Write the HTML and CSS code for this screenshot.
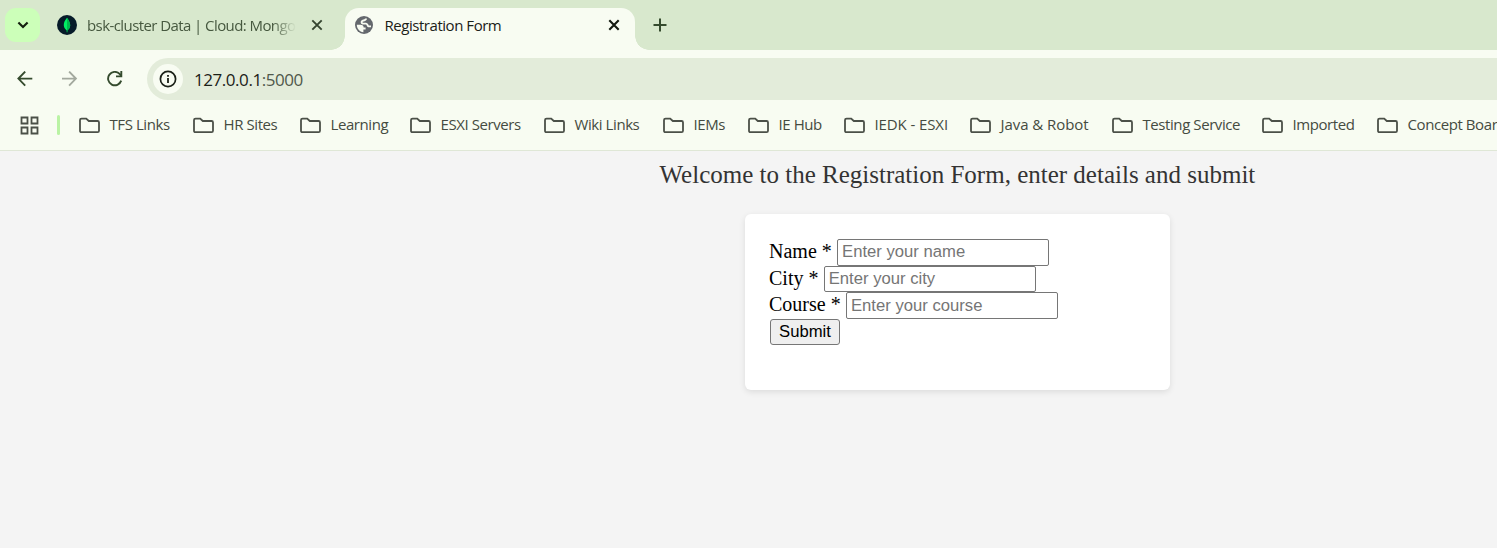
FILE: index.html
```html
<!DOCTYPE html>
<html lang="en">
<head>
<meta charset="utf-8">
<title>Registration Form</title>
<link rel="stylesheet" href="styles.css">
</head>
<body>
<svg class="defs" width="0" height="0"><symbol id="folder" viewBox="0 0 22 17"><path d="M2.6 1.6H7.2L9.8 4H18.6Q20 4 20 5.4V13.8Q20 15.2 18.6 15.2H2.4Q1 15.2 1 13.8V3Q1 1.6 2.6 1.6Z" fill="none" stroke="#4b5048" stroke-width="1.8"/></symbol></svg>
<header class="browser">
  <div class="tabs">
    <div class="search"><svg width="16" height="16" viewBox="0 0 16 16"><path d="M3.4 5.5L8 10L12.6 5.5" fill="none" stroke="#14200f" stroke-width="2.2"/></svg></div>
    <div class="tab idle">
      <svg class="fav" width="20" height="20" viewBox="0 0 20 20"><circle cx="10" cy="10" r="10" fill="#061b29"/><path d="M10 2.8C7.5 6 6.6 8 6.8 10.5C7 13 8.5 14.5 9.7 15.4V17.2H10.3V15.4C11.8 14.3 13.1 12.6 13.2 10.4C13.3 8 12 5.5 10 2.8Z" fill="#00ed64"/><path d="M10 2.8V17.2H10.3V15.4C11.8 14.3 13.1 12.6 13.2 10.4C13.3 8 12 5.5 10 2.8Z" fill="#00b84e"/></svg>
      <span class="title long">bsk-cluster Data | Cloud: Mongo</span>
      <svg class="close" width="12" height="12" viewBox="0 0 12 12"><path d="M1.3 1.3L10.7 10.7M10.7 1.3L1.3 10.7" stroke="#35452f" stroke-width="1.9"/></svg>
    </div>
    <div class="tab active">
      <svg class="fav globe" width="18" height="18" viewBox="0 0 18 18"><circle cx="9" cy="9" r="9" fill="#64686d"/><path d="M1.8 8.8H5.6C7.6 8.8 8.6 9.8 8.6 11.6H10.6V13.6H8.4V16.2C4.6 15.8 1.8 12.9 1.8 8.8Z" fill="#f8fcf2"/><path d="M11 2.6C11 4.4 9.4 4.6 7.6 4.8C6.2 5.2 6.2 7.2 7.8 7.6H11C13 7.8 12.2 10 13.6 10.4H16" fill="none" stroke="#f8fcf2" stroke-width="1.9"/></svg>
      <span class="title">Registration Form</span>
      <svg class="close" width="12" height="12" viewBox="0 0 12 12"><path d="M1.3 1.3L10.7 10.7M10.7 1.3L1.3 10.7" stroke="#141a11" stroke-width="2.1"/></svg>
    </div>
    <svg class="plus" width="14" height="14" viewBox="0 0 14 14"><path d="M7 .5V13.5M.5 7H13.5" stroke="#354b2e" stroke-width="2"/></svg>
  </div>
  <div class="toolbar">
    <svg class="nav" width="16" height="16" viewBox="0 0 16 16"><path d="M15.3 7.6H1.6M8.2 .6L1.4 7.6L8.2 14.6" fill="none" stroke="#354b2e" stroke-width="1.9"/></svg>
    <svg class="nav" width="16" height="16" viewBox="0 0 16 16"><path d="M0 7.6H13.7M7.1 .6L13.9 7.6L7.1 14.6" fill="none" stroke="#a3a99e" stroke-width="1.9"/></svg>
    <svg class="nav" width="16" height="16" viewBox="0 0 16 16"><path d="M14.2 9.6A6.7 6.7 0 1 1 12.6 2.9L14 4.6" fill="none" stroke="#354b2e" stroke-width="1.9"/><path d="M14.3 0V5.4H9" fill="none" stroke="#354b2e" stroke-width="1.9"/></svg>
    <div class="address"><span class="info"><svg width="18" height="18" viewBox="0 0 18 18"><circle cx="9" cy="9" r="7.6" fill="none" stroke="#1b2118" stroke-width="1.7"/><path d="M9 8V13M9 5V6.8" stroke="#1b2118" stroke-width="1.8"/></svg></span><span class="url">127.0.0.1<span class="port">:5000</span></span></div>
  </div>
  <nav class="bookmarks">
    <svg class="apps" width="19" height="19" viewBox="0 0 19 19"><path d="M1.5 1.5H7.5V7.5H1.5ZM11.5 1.5H17.5V7.5H11.5ZM1.5 11.5H7.5V17.5H1.5ZM11.5 11.5H17.5V17.5H11.5Z" fill="none" stroke="#4b5048" stroke-width="1.8"/></svg>
    <span class="divider"></span>
    <ul class="folders">
      <li class="tfs"><svg><use href="#folder"/></svg><span>TFS Links</span></li>
      <li class="hr"><svg><use href="#folder"/></svg><span>HR Sites</span></li>
      <li class="learning"><svg><use href="#folder"/></svg><span>Learning</span></li>
      <li class="servers"><svg><use href="#folder"/></svg><span>ESXI Servers</span></li>
      <li class="wiki"><svg><use href="#folder"/></svg><span>Wiki Links</span></li>
      <li class="iems"><svg><use href="#folder"/></svg><span>IEMs</span></li>
      <li class="hub"><svg><use href="#folder"/></svg><span>IE Hub</span></li>
      <li class="iedk"><svg><use href="#folder"/></svg><span>IEDK - ESXI</span></li>
      <li class="java"><svg><use href="#folder"/></svg><span>Java &amp; Robot</span></li>
      <li class="testing"><svg><use href="#folder"/></svg><span>Testing Service</span></li>
      <li class="imported"><svg><use href="#folder"/></svg><span>Imported</span></li>
      <li class="concept"><svg><use href="#folder"/></svg><span>Concept Boar</span></li>
    </ul>
  </nav>
</header>
<main class="page">
  <h1>Welcome to the Registration Form, enter details and submit</h1>
  <form class="card">
    <div class="row"><label for="name">Name *</label><input id="name" placeholder="Enter your name"></div>
    <div class="row"><label for="city">City *</label><input id="city" placeholder="Enter your city"></div>
    <div class="row"><label for="course">Course *</label><input id="course" placeholder="Enter your course"></div>
    <button type="button">Submit</button>
  </form>
</main>
</body>
</html>
```
FILE: styles.css
```css
* { box-sizing: border-box; }
body { margin: 0; width: 1497px; height: 548px; overflow: hidden; background: #f4f4f4; }
svg { display: block; flex: none; }
.defs { position: absolute; }
.browser { height: 151px; background: #f8fcf2; border-bottom: 1px solid #dfe7d6; font-family: "Open Sans", sans-serif; font-size: 15px; white-space: nowrap; }
.tabs { height: 50px; display: flex; align-items: flex-start; background: #d8e8cd; }
.search { width: 35px; height: 34px; margin: 8px 0 0 5px; border-radius: 11px; background: #ccffb9; display: grid; place-items: center; }
.tab { display: flex; align-items: center; }
.idle { width: 305px; height: 50px; padding-left: 17px; color: #46583f; }
.title { width: 220px; margin-left: 10px; letter-spacing: -.46px; }
.idle .title { width: 210px; letter-spacing: -.58px; -webkit-mask-image: linear-gradient(90deg, #000 185px, transparent 209px); }
.idle .close { margin-left: 14px; }
.active { position: relative; width: 290px; height: 42px; margin-top: 8px; padding: 0 0 8px 10px; border-radius: 14px 14px 0 0; background: #f8fcf2; color: #1b2118; }
.active::before, .active::after { content: ""; position: absolute; bottom: 0; width: 14px; height: 14px; }
.active::before { left: -14px; background: radial-gradient(circle at 0 0, transparent 13.5px, #f8fcf2 14px); }
.active::after { right: -14px; background: radial-gradient(circle at 100% 0, transparent 13.5px, #f8fcf2 14px); }
.active .title { margin-left: 11.5px; padding-bottom: 1px; }
.active .close { margin-left: 3.5px; }
.plus { margin: 18px 0 0 18px; }
.toolbar { height: 50px; padding: 8px 0 0 17px; display: flex; align-items: flex-start; }
.nav { margin: 13px 29px 0 0; }
.nav + .nav + .nav { margin-right: 24px; }
.address { flex: 1; height: 42px; border-radius: 21px 0 0 21px; background: #e3ecda; display: flex; align-items: center; padding-left: 6px; }
.info { width: 30px; height: 30px; border-radius: 50%; background: #f8fcf2; display: grid; place-items: center; }
.url { margin-left: 11px; font-size: 17px; letter-spacing: -.45px; color: #1b2118; }
.port { color: #50584b; }
.bookmarks { height: 50px; display: flex; align-items: center; padding-left: 20px; color: #454b41; }
.apps { margin-top: 1px; }
.divider { width: 3px; height: 20px; margin-left: 18px; border-radius: 2px; background: #baf3a4; }
.folders { display: flex; flex: 1; margin: 0 0 0 19px; padding: 0; list-style: none; overflow: hidden; }
.folders li { display: flex; align-items: center; flex: none; letter-spacing: -.42px; }
.folders svg { width: 22px; height: 17px; margin-right: 8.5px; }
.folders span { padding-bottom: 2px; }
.tfs { width: 114px; }
.hr { width: 107px; }
.learning { width: 110px; }
.servers { width: 134px; }
.wiki { width: 119px; }
.iems { width: 85px; }
.hub { width: 96px; }
.folders .iedk { width: 126px; letter-spacing: -.1px; }
.folders .java { width: 142px; letter-spacing: -.05px; }
.testing { width: 150px; }
.imported { width: 115px; }
.concept { width: 120px; }
.page { width: 1497px; padding-left: 418px; font-family: "Liberation Serif", serif; }
h1 { margin: 0 0 0 241.5px; padding-top: 9px; height: 63px; font-size: 25px; line-height: 30px; font-weight: 400; white-space: nowrap; color: #333; }
.card { width: 425px; height: 176px; margin: 0 0 0 327px; padding: 25px 25px 25px 24px; border-radius: 6px; background: #fff; box-shadow: 0 2px 6px rgba(0, 0, 0, .1); }
.row { display: flex; height: 26.67px; gap: 5.3px; font-size: 20px; line-height: 24px; white-space: nowrap; }
.row input { width: 212px; height: 26.67px; margin: 0; padding: 1px 4px; border: 1px solid #767676; border-radius: 2px; font: 16.67px "Liberation Sans", sans-serif; }
.row input::placeholder { color: #757575; }
.card button { display: block; width: 70px; height: 26px; margin-left: 1px; padding: 0; border: 1px solid #767676; border-radius: 3px; background: #efefef; color: #000; font: 16.67px "Liberation Sans", sans-serif; }
```
